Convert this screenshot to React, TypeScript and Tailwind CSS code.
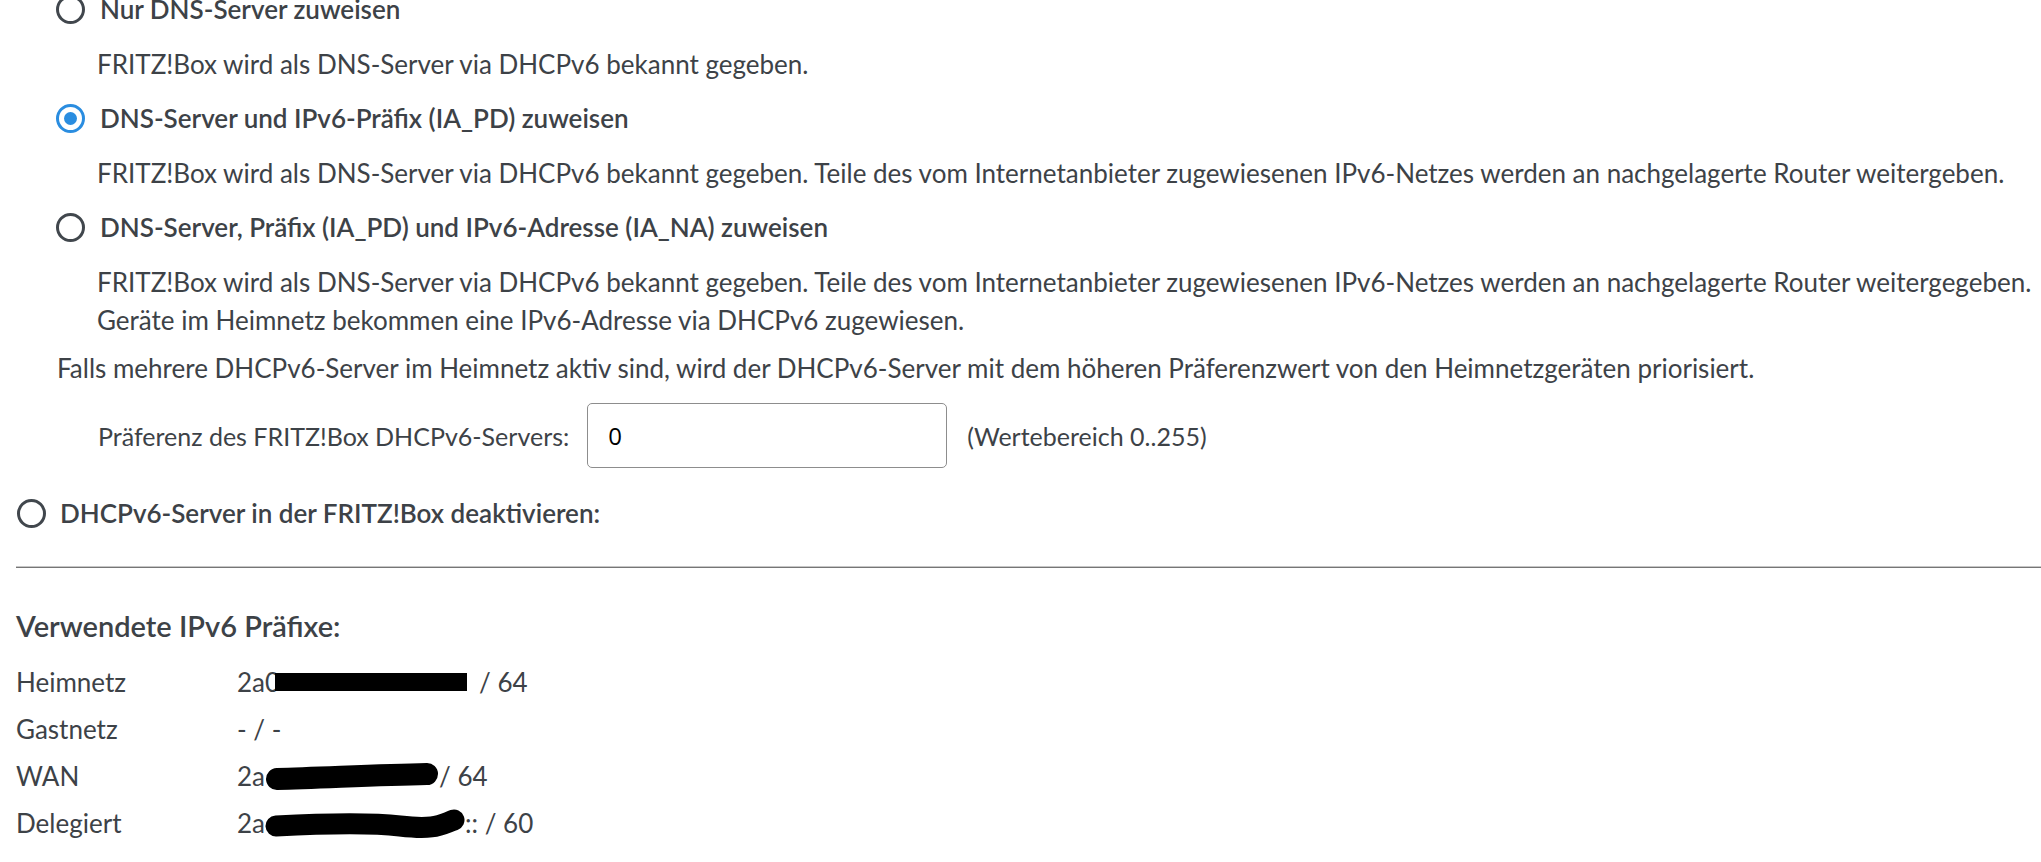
import React from 'react';

// FRITZ!Box – DHCPv6 settings fragment

function Radio({ checked = false }: { checked?: boolean }) {
  if (checked) {
    return (
      <span className="flex h-[29px] w-[29px] shrink-0 items-center justify-center rounded-full border-[3px] border-[#2a8de0]">
        <span className="h-[13px] w-[13px] rounded-full bg-[#2a8de0]" />
      </span>
    );
  }
  return <span className="h-[29px] w-[29px] shrink-0 rounded-full border-[3px] border-[#41474d]" />;
}

function Option({ label, checked, children }: { label: string; checked?: boolean; children?: React.ReactNode }) {
  return (
    <>
      <div className="flex h-[38px] items-center gap-[15px] font-semibold">
        <Radio checked={checked} />
        <span>{label}</span>
      </div>
      {children && <p className="pl-[41px]">{children}</p>}
    </>
  );
}

const desc = 'FRITZ!Box wird als DNS-Server via DHCPv6 bekannt gegeben.';
const descPd =
  'FRITZ!Box wird als DNS-Server via DHCPv6 bekannt gegeben. Teile des vom Internetanbieter zugewiesenen IPv6-Netzes werden an nachgelagerte Router weitergeben.';
const descNa =
  'FRITZ!Box wird als DNS-Server via DHCPv6 bekannt gegeben. Teile des vom Internetanbieter zugewiesenen IPv6-Netzes werden an nachgelagerte Router weitergegeben.';

function Blot({ kind }: { kind: 'rect' | 'pill' | 'wave' }) {
  if (kind === 'rect') {
    return <span className="ml-[-5px] inline-block h-[18px] w-[192px] bg-black align-[-2px]" />;
  }
  if (kind === 'pill') {
    return (
      <svg width="174" height="28" viewBox="0 0 174 28" className="inline-block align-[-6px]">
        <path d="M12 17 C 55 16, 110 13, 162 12" stroke="#000" strokeWidth="22" strokeLinecap="round" fill="none" />
      </svg>
    );
  }
  return (
    <svg width="200" height="30" viewBox="0 0 200 30" className="inline-block align-[-7px]">
      <path
        d="M11 18 C 50 16, 100 14, 135 18 S 175 17, 189 12"
        stroke="#000"
        strokeWidth="21"
        strokeLinecap="round"
        fill="none"
      />
    </svg>
  );
}

const prefixes = [
  { name: 'Heimnetz', value: <>2a0<Blot kind="rect" /><span className="ml-[12px]">/ 64</span></> },
  { name: 'Gastnetz', value: <>- / -</> },
  { name: 'WAN', value: <>2a<Blot kind="pill" />/ 64</> },
  { name: 'Delegiert', value: <>2a<Blot kind="wave" />:: / 60</> },
];

export default function App() {
  return (
    <div className="h-[862px] w-full overflow-hidden bg-white font-['Lato',sans-serif] text-[26px] leading-[38px] text-[#3d4247]">
      <div className="mt-[-10px] pl-[16px]">
        <div className="flex flex-col gap-[16.5px] pl-[40px]">
          <Option label="Nur DNS-Server zuweisen">{desc}</Option>
          <Option label="DNS-Server und IPv6-Präfix (IA_PD) zuweisen" checked>
            {descPd}
          </Option>
          <Option label="DNS-Server, Präfix (IA_PD) und IPv6-Adresse (IA_NA) zuweisen">
            {descNa}
            <br />
            Geräte im Heimnetz bekommen eine IPv6-Adresse via DHCPv6 zugewiesen.
          </Option>
        </div>

        <p className="mt-[10.5px] pl-[41px]">
          Falls mehrere DHCPv6-Server im Heimnetz aktiv sind, wird der DHCPv6-Server mit dem höheren Präferenzwert von den
          Heimnetzgeräten priorisiert.
        </p>

        <div className="mt-[16px] flex h-[65px] items-center pl-[82px] text-[25px]">
          <span>Präferenz des FRITZ!Box DHCPv6-Servers:</span>
          <div className="ml-[18px] flex h-[65px] w-[360px] items-center rounded-[5px] border border-[#8d8d8d] pl-[20px] font-['Open_Sans',sans-serif] text-[24px] text-black">
            0
          </div>
          <span className="ml-[20px]">(Wertebereich 0..255)</span>
        </div>

        <div className="mt-[26px] flex h-[38px] items-center gap-[14px] pl-[1px] font-semibold">
          <Radio />
          <span>DHCPv6-Server in der FRITZ!Box deaktivieren:</span>
        </div>

        <div className="mt-[34px]">
          <div className="h-px bg-[#c6c6c6]" />
          <div className="h-px bg-[#767676]" />
        </div>

        <h2 className="mt-[39px] h-[38px] text-[29px] font-semibold">Verwendete IPv6 Präfixe:</h2>

        <div className="mt-[13.5px] grid grid-cols-[221px_1fr]">
          {prefixes.map((p) => (
            <React.Fragment key={p.name}>
              <div className="flex h-[47px] items-center">{p.name}</div>
              <div className="flex h-[47px] items-center whitespace-pre">{p.value}</div>
            </React.Fragment>
          ))}
        </div>
      </div>
    </div>
  );
}
